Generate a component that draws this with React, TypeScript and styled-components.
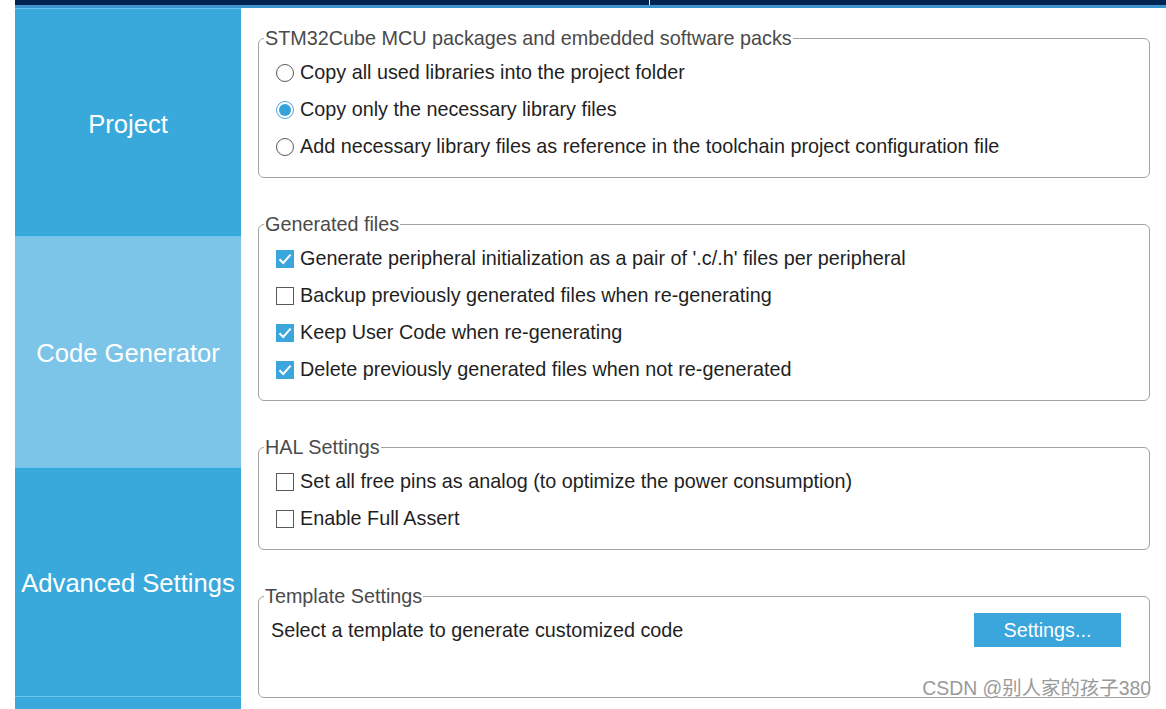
import React from 'react'
import styled, { createGlobalStyle } from 'styled-components'

const GlobalStyle = createGlobalStyle`
  html, body {
    margin: 0;
    padding: 0;
    background: #ffffff;
    font-family: 'Liberation Sans', Arial, sans-serif;
  }
  * {
    box-sizing: border-box;
  }
`

const sidebarItems = [
  { label: 'Project', active: false, height: 228 },
  { label: 'Code Generator', active: true, height: 231 },
  { label: 'Advanced Settings', active: false, height: 229 },
]

type Option = { label: string; checked: boolean }

const groups: { title: string; kind: 'radio' | 'check'; options: Option[] }[] = [
  {
    title: 'STM32Cube MCU packages and embedded software packs',
    kind: 'radio',
    options: [
      { label: 'Copy all used libraries into the project folder', checked: false },
      { label: 'Copy only the necessary library files', checked: true },
      {
        label: 'Add necessary library files as reference in the toolchain project configuration file',
        checked: false,
      },
    ],
  },
  {
    title: 'Generated files',
    kind: 'check',
    options: [
      { label: "Generate peripheral initialization as a pair of '.c/.h' files per peripheral", checked: true },
      { label: 'Backup previously generated files when re-generating', checked: false },
      { label: 'Keep User Code when re-generating', checked: true },
      { label: 'Delete previously generated files when not re-generated', checked: true },
    ],
  },
  {
    title: 'HAL Settings',
    kind: 'check',
    options: [
      { label: 'Set all free pins as analog (to optimize the power consumption)', checked: false },
      { label: 'Enable Full Assert', checked: false },
    ],
  },
]

export default function App() {
  return (
    <>
      <GlobalStyle />
      <Page>
        <TopBar>
          <TabDivider />
        </TopBar>
        <Body>
          <Sidebar>
            {sidebarItems.map(item => (
              <SideItem key={item.label} $active={item.active} $height={item.height}>
                {item.label}
              </SideItem>
            ))}
            <SideTail />
          </Sidebar>
          <Content>
            {groups.map(group => (
              <Group key={group.title}>
                <Legend>{group.title}</Legend>
                <OptionList>
                  {group.options.map(opt => (
                    <OptionRow key={opt.label}>
                      {group.kind === 'radio' ? (
                        <Radio $checked={opt.checked} />
                      ) : (
                        <CheckBox $checked={opt.checked}>
                          {opt.checked && (
                            <svg width="14" height="14" viewBox="0 0 14 14">
                              <path
                                d="M1.5 7.2 L5.2 11 L12.6 2.6"
                                fill="none"
                                stroke="#ffffff"
                                strokeWidth="2"
                              />
                            </svg>
                          )}
                        </CheckBox>
                      )}
                      <OptionText>{opt.label}</OptionText>
                    </OptionRow>
                  ))}
                </OptionList>
              </Group>
            ))}
            <Group>
              <Legend>Template Settings</Legend>
              <TemplateRow>
                <TemplateText>Select a template to generate customized code</TemplateText>
                <SettingsButton>Settings...</SettingsButton>
              </TemplateRow>
            </Group>
          </Content>
        </Body>
        <Watermark>CSDN @别人家的孩子380</Watermark>
      </Page>
    </>
  )
}

const Page = styled.div`
  position: relative;
  width: 1166px;
  height: 709px;
  overflow: hidden;
  padding-left: 15px;
  background: #ffffff;
`

const TopBar = styled.div`
  position: relative;
  height: 8px;
  background: #002352;
  border-bottom: 3px solid #3b94cc;
`

const TabDivider = styled.div`
  position: absolute;
  left: 634px;
  top: 0;
  width: 1px;
  height: 5px;
  background: #e8eef5;
`

const Body = styled.div`
  display: flex;
  height: 701px;
`

const Sidebar = styled.div`
  width: 226px;
  flex: none;
  display: flex;
  flex-direction: column;
  background: #39a9db;
  border-top: 1px solid #62c6f0;
`

const SideItem = styled.div<{ $active: boolean; $height: number }>`
  height: ${p => p.$height}px;
  flex: none;
  display: flex;
  align-items: center;
  justify-content: center;
  background: ${p => (p.$active ? '#7dc5e8' : '#39a9db')};
  border-bottom: 1px solid #66c8f1;
  color: #ffffff;
  font-size: 25.6px;
  white-space: nowrap;
  padding-top: 3px;
`

const SideTail = styled.div`
  flex: 1;
  background: #39a9db;
`

const Content = styled.div`
  flex: 1;
  display: flex;
  flex-direction: column;
  gap: 36px;
  padding: 20px 16px 0 17px;
`

const Group = styled.fieldset`
  margin: 0;
  padding: 0;
  border: 1px solid #a3a3a3;
  border-radius: 6px;
  min-width: 0;
`

const Legend = styled.legend`
  margin-left: 5px;
  padding: 0 1px;
  font-size: 19.8px;
  line-height: 20px;
  color: #4a4a4a;
`

const OptionList = styled.div`
  display: flex;
  flex-direction: column;
  padding: 6px 0 12px 17px;
`

const OptionRow = styled.div`
  height: 37px;
  display: flex;
  align-items: center;
  gap: 6px;
`

const Radio = styled.span<{ $checked: boolean }>`
  width: 18px;
  height: 18px;
  flex: none;
  border-radius: 50%;
  border: 1px solid ${p => (p.$checked ? '#4aa7d8' : '#5a5a5a')};
  background: #ffffff;
  display: flex;
  align-items: center;
  justify-content: center;

  &::after {
    content: '';
    width: 12px;
    height: 12px;
    border-radius: 50%;
    background: ${p => (p.$checked ? '#35a2dc' : 'transparent')};
  }
`

const CheckBox = styled.span<{ $checked: boolean }>`
  width: 18px;
  height: 18px;
  flex: none;
  border: 1px solid ${p => (p.$checked ? '#3aa6db' : '#5a5a5a')};
  background: ${p => (p.$checked ? '#3aa6db' : '#ffffff')};
  display: flex;
  align-items: center;
  justify-content: center;
`

const OptionText = styled.span`
  font-size: 19.8px;
  color: #1f1f1f;
  white-space: nowrap;
`

const TemplateRow = styled.div`
  display: flex;
  align-items: center;
  justify-content: space-between;
  height: 34px;
  margin: 7px 28px 50px 12px;
`

const TemplateText = styled.span`
  font-size: 19.8px;
  color: #1f1f1f;
`

const SettingsButton = styled.button`
  width: 147px;
  height: 34px;
  border: none;
  background: #3aa6db;
  color: #ffffff;
  font-family: 'Liberation Sans', Arial, sans-serif;
  font-size: 19.8px;
  padding: 0;
`

const Watermark = styled.div`
  position: absolute;
  right: 15px;
  bottom: 8px;
  font-family: 'Liberation Sans', 'Noto Sans CJK SC', sans-serif;
  font-size: 19.4px;
  color: #9a9a9a;
  text-shadow: 0 0 1px #ffffff, 0 0 1px #ffffff;
`
